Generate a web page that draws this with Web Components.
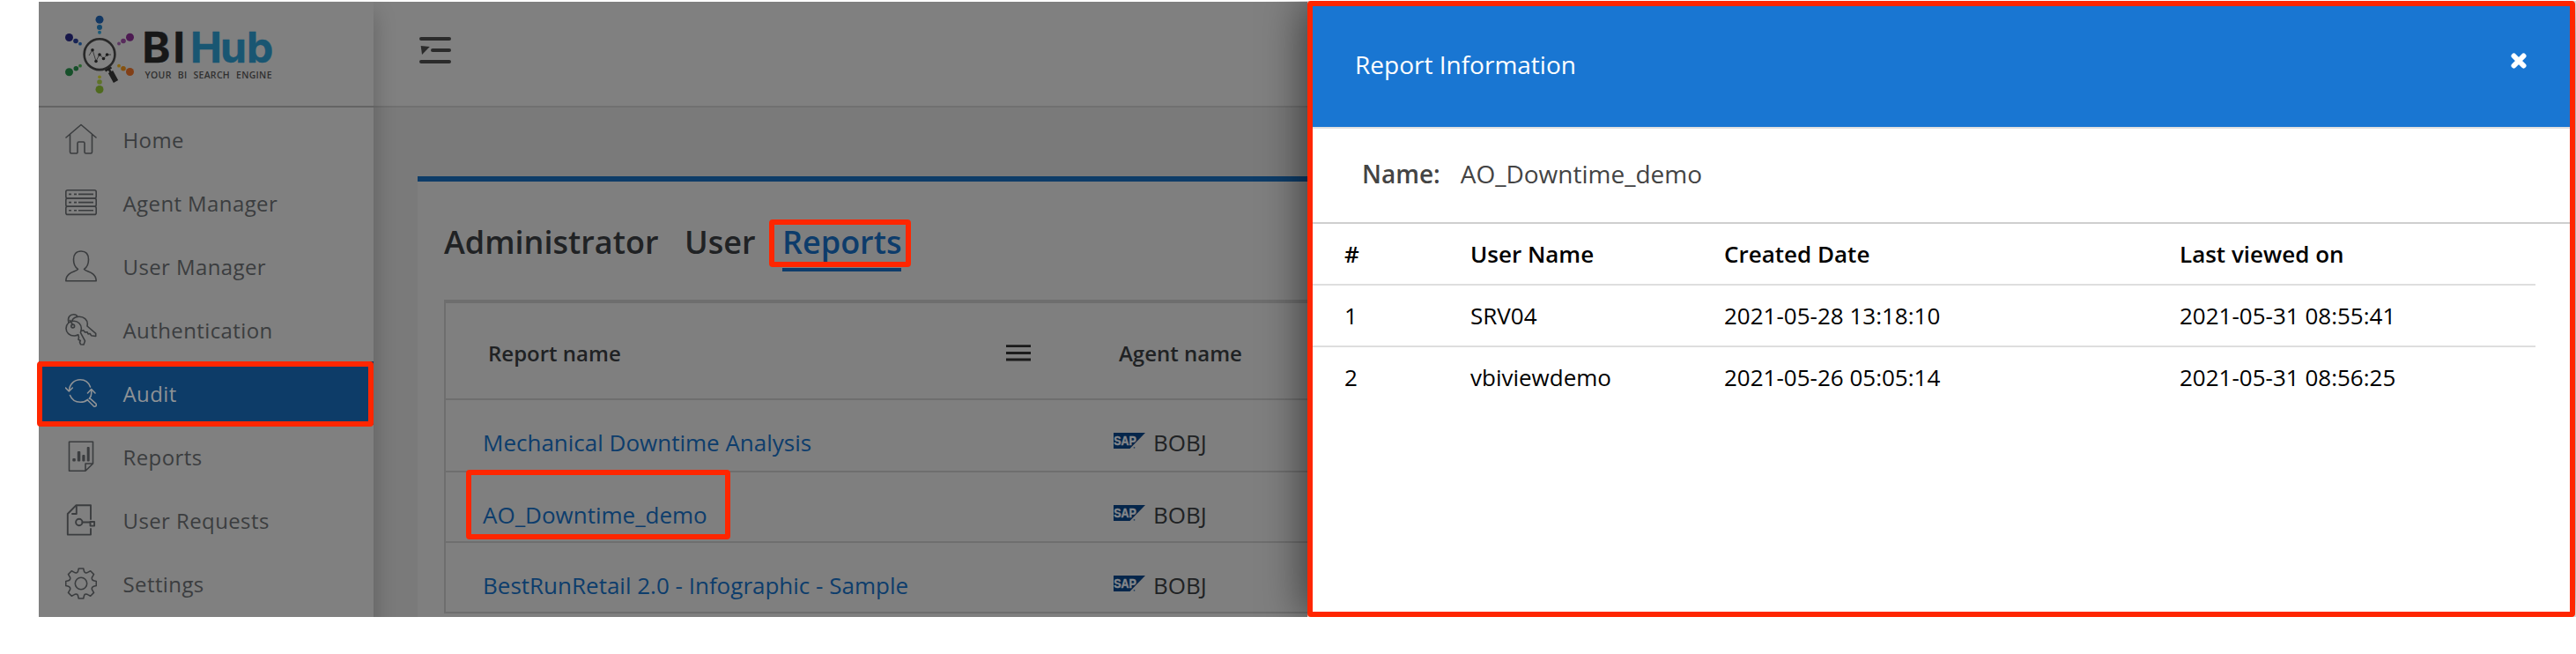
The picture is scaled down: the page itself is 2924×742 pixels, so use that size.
<!DOCTYPE html>
<html lang="en">
<head>
<meta charset="utf-8">
<title>BI Hub</title>
<style>
  body { margin: 0; background: #fff; font-family: "Open Sans", "Noto Sans", sans-serif; }
</style>
</head>
<body>
<bi-app></bi-app>
<script>
const define = (name, html, setup) => {
  const tpl = document.createElement('template');
  tpl.innerHTML = html;
  customElements.define(name, class extends HTMLElement {
    constructor() {
      super();
      this.attachShadow({ mode: 'open' }).append(tpl.content.cloneNode(true));
    }
    connectedCallback() { if (setup) setup(this, this.shadowRoot); }
  });
};

const ICONS = {
  home: '<path d="M1 16 18 1.5 35 16M5.500 12.500V32.500a1.500 1.500 0 0 0 1.500 1.500h5.500a1.500 1.500 0 0 0 1.500-1.500V22.500a1.500 1.500 0 0 1 1.500-1.500h5a1.500 1.500 0 0 1 1.500 1.500V32.500a1.500 1.500 0 0 0 1.500 1.500h5.500a1.500 1.500 0 0 0 1.500-1.500V12.500"/>',
  server: '<rect x=".8" y="3.800" width="34.400" height="9.200" rx="2"/><rect x=".8" y="13" width="34.400" height="9.200" rx="2"/><rect x=".8" y="22.200" width="34.400" height="9.200" rx="2"/><path stroke-linecap="butt" d="M4 8.400h3m3 0h3m2 0h17M4 17.600h3m3 0h3m2 0h17M4 26.800h3m3 0h3m2 0h17"/>',
  user: '<path d="M14.500 21.500C11 19 9.500 15 9.500 10.500 9.500 4.500 12.500 1 18 1s8.500 3.500 8.500 9.500c0 4.500-1.500 8.500-5 11C23 24.500 35 24 35.200 34.700H.8C1 24 13 24.500 14.500 21.500Z"/>',
  keys: '<circle cx="8.700" cy="14" r="1.900"/><path d="M3.800 9.500C2.500 4 5.500 .8 9.500 .8c2 0 3.800 1 4.500 2.800M7.500 8.200C9 4.600 12 3.200 16 3.200c5.300 0 9.300 3.500 9.300 8.200l-.3 2.600 9.700 8.300v3.200l-5.200-.8-1.300-2.200-2.200 .4-1-2.200-2.600 .2-1.700-2.200-2.600 .8M8.500 12.500 5.500 7.500M14.800 23.800c-1.500 .9-3 1.200-4.600 1.200C5 25 1 21.500 1 16.500S5 8.300 9.800 8.300s8.600 3.700 8.600 8.500l-1 4.600 5.100 9.400-1.500 4.200-3.500-.3-1-2.500 .8-1.700-2.300-1.300 .5-2.300Z"/>',
  audit: '<path d="M4.500 15C5 7.500 10.500 2.800 17 2.800c5.500 0 9.500 2.700 11.500 8.200M5.500 20.500C7.500 25.500 12 28.300 17.200 28.300c3.500 0 6-1 8.300-3M.5 12l3.800 4 4-4M25.500 18l4.200-4.500L34 18M29.700 14v4.500c0 2-1 4.300-2.400 5.800M25.300 25.800l7 7c1.800 1.200 4-.8 2.700-2.600l-7.300-6.500"/>',
  reports: '<path d="M4.500 1.300H31.500V26L23 34.300H4.500ZM31.500 26H23v8.300"/><g fill="currentColor" stroke="none"><rect x="8.300" y="20" width="3.500" height="3.500" rx="1"/><rect x="13.800" y="12" width="3.500" height="11.500" rx="1"/><rect x="19.300" y="16" width="3.200" height="7.500" rx="1"/><rect x="24.700" y="7" width="3" height="16.500" rx="1"/></g>',
  requests: '<g stroke-width="1.900"><path d="M29 17V1.200H12.500L2.800 11V34.600H29V28M8 11h4.800V2"/><circle cx="15.800" cy="20.500" r="3.700"/><path d="M19.500 20.500H28"/><rect x="28.500" y="20" width="4.600" height="4.600"/></g>',
  gear: '<circle cx="18" cy="18" r="6.700"/><path d="M15.300 1h5.400l.9 3.600q.4 1.200 1.600 1.300 1.400 .2 2.400-.5L28.700 3.800l3.800 3.800-1.900 3.200q-.6 1-.1 2.300 .6 1.400 1.800 1.700L35.300 15.500v5l-3 .7q-1.200 .3-1.800 1.700-.5 1.300 .1 2.300l1.900 3.200-3.800 3.800-3.100-1.600q-1-.7-2.400-.5-1.200 .1-1.600 1.300L20.700 35h-5.400l-.9-3.600q-.4-1.200-1.600-1.300-1.400-.2-2.400 .5L7.300 32.200 3.500 28.400l1.900-3.200q.6-1 .1-2.300-.6-1.400-1.800-1.700L.7 20.500v-5l3-.7q1.200-.3 1.800-1.700 .5-1.300-.1-2.300L3.500 7.600 7.300 3.800l3.100 1.600q1 .7 2.400 .5 1.200-.1 1.600-1.300Z"/>'
};

define('bi-icon', `
  <style>
    :host { display: block; width: 36px; height: 36px; flex: none; }
    svg { display: block; fill: none; stroke: currentColor; stroke-width: 1.6; stroke-linejoin: round; stroke-linecap: round; }
  </style>
  <svg width="36" height="36" viewBox="0 0 36 36"></svg>`,
  (el, root) => { root.querySelector('svg').innerHTML = ICONS[el.getAttribute('name')]; });

/* Outline that calls attention to a part of the page */
define('bi-marker', `
  <style>
    :host { position: absolute; box-sizing: border-box; border: 6px solid #ff2600; border-radius: 4px; z-index: 5; pointer-events: none; }
  </style>`);

define('bi-logo', `
  <style>:host { display: block; } svg { display: block; }</style>
  <svg width="380" height="118" viewBox="44 2 380 118">
    <circle cx="113" cy="22.300" r="4.500" fill="#123763"/>
    <circle cx="113" cy="31" r="3" fill="#15496c"/><circle cx="113" cy="36.700" r="2" fill="#1a5a78"/>
    <circle cx="78.500" cy="42.500" r="4.500" fill="#17174a"/><circle cx="86" cy="46.500" r="2.800" fill="#182455"/><circle cx="91" cy="49.700" r="1.900" fill="#173f6e"/>
    <circle cx="147.500" cy="42.300" r="4.500" fill="#4d1a52"/><circle cx="140" cy="46.500" r="2.800" fill="#582b5c"/><circle cx="135" cy="49.500" r="1.900" fill="#5c3862"/>
    <circle cx="78.500" cy="81.700" r="4.500" fill="#16502a"/><circle cx="86.300" cy="77.700" r="2.800" fill="#174f2b"/><circle cx="91" cy="74.700" r="1.900" fill="#2a652e"/>
    <circle cx="147.500" cy="81.500" r="4.500" fill="#823f17"/><circle cx="140" cy="77.700" r="2.800" fill="#85520f"/><circle cx="135" cy="74.700" r="1.900" fill="#856512"/>
    <circle cx="113" cy="101.500" r="4.500" fill="#4f6a1e"/><circle cx="113" cy="93" r="2.800" fill="#5f7428"/><circle cx="113" cy="87.300" r="1.900" fill="#7b7a1c"/>
    <circle cx="113" cy="61.700" r="17.400" fill="#838383" stroke="#282828" stroke-width="2.600"/>
    <path d="M101 63l4-6.500 4 13 4-8 4.500 5 4-4.500h4.500" fill="none" stroke="#333" stroke-width=".9"/>
    <g fill="#1d1d1d"><circle cx="105" cy="56.800" r="1.800"/><circle cx="109" cy="69.500" r="1.800"/><circle cx="113" cy="62" r="1.800"/><circle cx="117.500" cy="66.500" r="1.800"/><circle cx="121.500" cy="62" r="1.800"/></g>
    <path d="M119.500 80.500l7-4M123.500 78.500l2.500 4" stroke="#1e1e1e" stroke-width="2.400"/>
    <path d="M125.500 81.500l6 11" stroke="#1e1e1e" stroke-width="6"/>
    <g font-family="Inter, 'Open Sans', sans-serif" font-weight="700" font-size="48" stroke-width=".5" stroke-linejoin="round">
      <text x="161.500 196.500" y="71" fill="#171717" stroke="#171717">BI</text>
      <text x="216 250 280" y="71" fill="#195672" stroke="#195672">Hub</text>
    </g>
    <text x="164.500" y="88.500" fill="#303030" font-family="'Open Sans', sans-serif" font-weight="600" font-size="10.500" word-spacing="4" textLength="144">YOUR BI SEARCH ENGINE</text>
  </svg>`);

define('bi-nav-item', `
  <style>
    :host { display: flex; align-items: center; height: 72px; padding-left: 30px; box-sizing: border-box; color: #3b3d3f; position: relative; }
    :host([active]) { background: #0d3c68; color: #8e9296; }
    span { font-size: 24px; letter-spacing: .4px; margin-left: 29.500px; line-height: 32px; padding-top: 1px; white-space: nowrap; }
    bi-marker { display: none; left: -2.500px; top: 0; width: 382px; height: 74px; }
    :host([active]) bi-marker { display: block; }
  </style>
  <bi-icon></bi-icon><span><slot></slot></span><bi-marker></bi-marker>`,
  (el, root) => {
    const icon = document.createElement('bi-icon');
    icon.setAttribute('name', el.getAttribute('icon'));
    root.querySelector('bi-icon').replaceWith(icon);
  });

define('bi-sidebar', `
  <style>
    :host { display: block; background: #808080; box-shadow: 12px 0 24px -12px rgba(0,0,0,.24); position: relative; z-index: 2; }
    header { height: 118px; border-bottom: 2px solid #646464; }
  </style>
  <header><bi-logo></bi-logo></header>
  <nav>
    <bi-nav-item icon="home">Home</bi-nav-item>
    <bi-nav-item icon="server">Agent Manager</bi-nav-item>
    <bi-nav-item icon="user">User Manager</bi-nav-item>
    <bi-nav-item icon="keys">Authentication</bi-nav-item>
    <bi-nav-item icon="audit" active>Audit</bi-nav-item>
    <bi-nav-item icon="reports">Reports</bi-nav-item>
    <bi-nav-item icon="requests">User Requests</bi-nav-item>
    <bi-nav-item icon="gear">Settings</bi-nav-item>
  </nav>`);

define('bi-topbar', `
  <style>
    :host { display: flex; height: 120px; padding: 40px 0 0 52px; box-sizing: border-box; background: #808080; border-bottom: 2px solid #707070; }
  </style>
  <svg width="36" height="30" viewBox="0 0 36 30"><g fill="#2b2b2b">
    <rect y="0" width="36" height="4" rx="2"/><rect x="13" y="13" width="23" height="4" rx="2"/><rect y="26" width="36" height="4" rx="2"/>
    <path d="M1.700 10 11.800 11 3 20Z"/></g></svg>`);

define('bi-tabs', `
  <style>
    :host { display: flex; height: 64px; font-size: 36px; font-weight: 600; line-height: 62px; color: #202224; }
    a { white-space: nowrap; box-sizing: border-box; position: relative; height: 64px; }
    .user { margin: 0 30.500px 0 29.500px; }
    .on { color: #0d3c6b; border-bottom: 4px solid #0d3c6b; }
    bi-marker { left: -15px; top: 5px; width: 161px; height: 54px; }
  </style>
  <a>Administrator</a><a class="user">User</a><a class="on">Reports<bi-marker></bi-marker></a>`);

define('report-row', `
  <style>
    :host { display: grid; grid-template-columns: 717px 1fr; height: 80px; padding: 18px 0 0 41px; box-sizing: border-box; border-bottom: 2px solid #6e6e6e; font-size: 26px; line-height: 60px; position: relative; }
    :host([first]) { height: 82px; }
    a { color: #0d3d6c; white-space: nowrap; padding-left: 1px; }
    .agent { display: flex; color: #202224; }
    svg { margin: 19px 9px 0 0; flex: none; }
    bi-marker { display: none; left: 23px; top: -3px; width: 300px; height: 79px; }
    :host([marked]) bi-marker { display: block; }
  </style>
  <a><slot></slot></a>
  <div class="agent">
    <svg width="36" height="18" viewBox="0 0 36 18"><path d="M0 0H36L18.500 18H0Z" fill="#05264b"/>
      <text x=".3" y="13.800" font-family="'Liberation Sans', sans-serif" font-weight="700" font-size="14" fill="#85888b" stroke="#85888b" stroke-width=".5" textLength="25.500" lengthAdjust="spacingAndGlyphs">SAP</text>
      <circle cx="23.500" cy="16.800" r=".9" fill="#24405f"/></svg>
    <span>BOBJ</span>
  </div>
  <bi-marker></bi-marker>`);

define('report-table', `
  <style>
    :host { display: block; margin-top: 32px; border-left: 2px solid #6e6e6e; border-top: 4px solid #6e6e6e; }
    header { display: grid; grid-template-columns: 588px 128px 1fr; height: 110px; padding: 5px 0 0 48px; box-sizing: border-box; border-bottom: 2px solid #6e6e6e; font-size: 24px; font-weight: 600; line-height: 103px; color: #202224; }
    svg { margin-top: 42px; }
  </style>
  <header><span>Report name</span>
    <svg width="28" height="20" viewBox="0 0 28 20"><path d="M0 1.700h28M0 9.500h28M0 17h28" stroke="#1b1b1b" stroke-width="2.800"/></svg>
    <span>Agent name</span></header>
  <report-row first>Mechanical Downtime Analysis</report-row>
  <report-row marked>AO_Downtime_demo</report-row>
  <report-row>BestRunRetail 2.0 - Infographic - Sample</report-row>`);

define('bi-main', `
  <style>
    :host { display: block; background: #7a7a7a; min-width: 0; }
    section { margin: 78px 0 0 50px; border-top: 6px solid #0d3c68; background: #7f7f7f; padding: 38px 0 0 30px; height: 500px; box-sizing: border-box; }
  </style>
  <bi-topbar></bi-topbar>
  <section><bi-tabs></bi-tabs><report-table></report-table></section>`);

define('drawer-row', `
  <style>
    :host { display: grid; grid-template-columns: 143px 288px 517px 1fr; width: 1388px; height: 70px; padding-left: 36px; box-sizing: border-box; border-bottom: 2px solid #dedede; font-size: 26px; line-height: 68px; color: #000; }
    :host([head]) { font-weight: 600; }
    :host([last]) { border: 0; }
  </style>
  <slot></slot>`);

define('report-drawer', `
  <style>
    :host { display: block; position: relative; z-index: 3; margin: -1px 1px 0 0; box-sizing: border-box; border: 6px solid #ff2600; border-radius: 4px; background: #fff; box-shadow: 0 0 52px rgba(0,0,0,.62); }
    header { display: flex; justify-content: space-between; height: 137px; background: #1976d2; color: #fff; font-size: 28px; line-height: 132px; padding: 0 49px 0 48px; border-bottom: 2px solid #e0e0e0; }
    svg { margin-top: 53px; }
    .name { height: 106px; line-height: 102px; font-size: 28px; color: #444; padding-left: 56px; border-bottom: 2px solid #cfcfcf; display: flex; gap: 23px; }
    b { font-weight: 600; }
  </style>
  <header><span>Report Information</span>
    <svg width="18" height="18" viewBox="0 0 18 18"><path d="M3.500 3.500l11 11M14.500 3.500l-11 11" stroke="#fff" stroke-width="6" stroke-linecap="round"/></svg></header>
  <div class="name"><b>Name:</b><span>AO_Downtime_demo</span></div>
  <drawer-row head><span>#</span><span>User Name</span><span>Created Date</span><span>Last viewed on</span></drawer-row>
  <drawer-row><span>1</span><span>SRV04</span><span>2021-05-28 13:18:10</span><span>2021-05-31 08:55:41</span></drawer-row>
  <drawer-row last><span>2</span><span>vbiviewdemo</span><span>2021-05-26 05:05:14</span><span>2021-05-31 08:56:25</span></drawer-row>`);

define('bi-app', `
  <style>
    :host { display: block; height: 742px; box-sizing: border-box; padding-top: 1px; overflow: hidden; }
    .frame { display: grid; grid-template-columns: 380px 1060px 1440px; height: 699px; padding: 1px 0 0 44px; box-sizing: border-box; clip-path: inset(0); }
    .frame > bi-main { height: 698px; }
    .frame > bi-sidebar { height: 740px; }
    .frame > report-drawer { height: 699px; }
  </style>
  <div class="frame"><bi-sidebar></bi-sidebar><bi-main></bi-main><report-drawer></report-drawer></div>`);
</script>
</body>
</html>
